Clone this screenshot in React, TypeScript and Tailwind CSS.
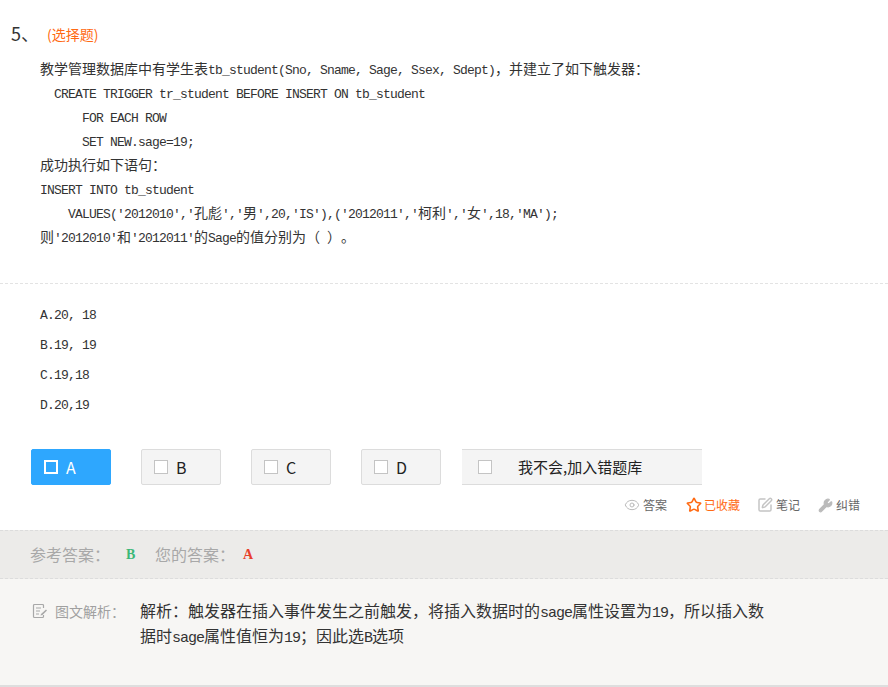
import { Eye, Star, SquarePen, Wrench } from "lucide-react";
import type { ReactNode } from "react";

const CJK = "font-['Noto_Sans_CJK_SC','Liberation_Sans',sans-serif] [text-spacing-trim:space-all]";

function M({ children }: { children: ReactNode }) {
  return (
    <span className="font-['Liberation_Mono',monospace] text-[13px] tracking-[-0.8px] leading-none whitespace-pre">
      {children}
    </span>
  );
}

function L({ children }: { children: ReactNode }) {
  return (
    <span className="font-['Liberation_Mono',monospace] text-[15px] tracking-[-1px] leading-none whitespace-pre">
      {children}
    </span>
  );
}

function Line({ children, className = "" }: { children: ReactNode; className?: string }) {
  return <div className={`h-6 leading-6 whitespace-pre ${className}`}>{children}</div>;
}

function Choice({ label, active }: { label: string; active?: boolean }) {
  return (
    <div
      className={`w-20 h-9 rounded-[2px] flex items-center pl-3 gap-2 text-base border ${
        active ? "bg-[#2ea7fe] border-[#2ea7fe] text-white" : "bg-[#f4f4f4] border-[#dcdcdc] text-[#222]"
      }`}
    >
      <span className={`w-3.5 h-3.5 block ${active ? "border-2 border-white" : "border border-[#c4c4c4] bg-white"}`} />
      <span>{label}</span>
    </div>
  );
}

function Action({ icon, label, className = "text-[#666] gap-[3px]" }: { icon: ReactNode; label: string; className?: string }) {
  return (
    <div className={`flex items-center text-xs ${className}`}>
      {icon}
      <span>{label}</span>
    </div>
  );
}

export default function App() {
  return (
    <div className={`w-[888px] h-[687px] overflow-hidden bg-white flex flex-col text-sm text-[#333] ${CJK}`}>
      <div className="h-[284px] border-b border-dashed border-[#e3e3e3]">
        <div className="flex items-center h-6 mt-[21px] pl-[11px]">
          <span className="w-9 text-lg text-[#333]">5、</span>
          <span className="text-sm text-[#ff6a13] mt-0.5">(选择题)</span>
        </div>
        <div className="pl-10 mt-[11px]">
          <Line>
            教学管理数据库中有学生表<M>tb_student(Sno, Sname, Sage, Ssex, Sdept)</M>，并建立了如下触发器：
          </Line>
          <Line className="pl-3.5">
            <M>CREATE TRIGGER tr_student BEFORE INSERT ON tb_student</M>
          </Line>
          <Line className="pl-[42px]">
            <M>FOR EACH ROW</M>
          </Line>
          <Line className="pl-[42px]">
            <M>SET NEW.sage=19;</M>
          </Line>
          <Line>成功执行如下语句：</Line>
          <Line>
            <M>INSERT INTO tb_student</M>
          </Line>
          <Line className="pl-7">
            <M>VALUES('2012010','</M>孔彪<M>','</M>男<M>',20,'IS'),('2012011','</M>柯利<M>','</M>女<M>',18,'MA');</M>
          </Line>
          <Line>
            则<M>'2012010'</M>和<M>'2012011'</M>的<M>Sage</M>的值分别为（<M> </M>）。
          </Line>
        </div>
      </div>

      <div className="pl-10 pt-3.5">
        {["A.20, 18", "B.19, 19", "C.19,18", "D.20,19"].map((t) => (
          <div key={t} className="h-[30px] leading-[30px]">
            <M>{t}</M>
          </div>
        ))}
      </div>

      <div className="flex mt-[31px] pl-[31px] gap-[30px]">
        <Choice label="A" active />
        <Choice label="B" />
        <Choice label="C" />
        <Choice label="D" />
        <div className="-ml-[9px] w-[240px] h-9 bg-[#f4f4f4] border-y border-[#dcdcdc] flex items-center pl-4 text-[#222]">
          <span className="w-3.5 h-3.5 block border border-[#c4c4c4] bg-white" />
          <span className="ml-[26px] text-[15px]">我不会,加入错题库</span>
        </div>
      </div>

      <div className="flex justify-end items-center gap-[17px] pr-7 h-10">
        <Action icon={<Eye size={16} strokeWidth={1.5} className="text-[#bbb]" />} label="答案" />
        <Action
          icon={<Star size={16} strokeWidth={2.4} className="text-[#ff6a13]" />}
          label="已收藏"
          className="text-[#ff6a13] gap-0.5 ml-0.5"
        />
        <Action icon={<SquarePen size={16} strokeWidth={2.2} className="text-[#c4c4c4]" />} label="笔记" />
        <Action
          icon={<Wrench size={15} className="text-[#bbb] fill-[#bbb]" />}
          label="纠错"
          className="text-[#666] gap-[3px] ml-px"
        />
      </div>

      <div className="h-[49px] mt-[5px] bg-[#ecebe9] border-y border-dashed border-[#dcdcdc] flex items-center pl-[30px] text-base text-[#a8a8a8]">
        <span className="w-[96px] -mt-0.5">参考答案：</span>
        <span className="w-[29px] font-['Liberation_Serif',serif] text-sm font-bold text-[#3cb878]">B</span>
        <span className="w-[88px] -mt-0.5">您的答案：</span>
        <span className="font-['Liberation_Serif',serif] text-sm font-bold text-[#e8402a]">A</span>
      </div>

      <div className="flex-1 bg-[#f7f6f4] border-b-2 border-[#dedede] flex pl-[32px] pt-[19px]">
        <svg width="16" height="16" viewBox="0 0 16 16" fill="none" stroke="#a8a8a8" strokeWidth="1.2" className="mt-[5px]">
          <path d="M11.5 5V2.5a1 1 0 0 0-1-1h-8a1 1 0 0 0-1 1v11a1 1 0 0 0 1 1h8a1 1 0 0 0 1-1V12" />
          <path d="M4 5h5M4 8h4M4 11h3" />
          <path d="M9 11l5-4.5 1 1-4.5 4.5-2 .5z" fill="#a8a8a8" stroke="none" />
        </svg>
        <span className="ml-[7px] w-[85px] text-sm text-[#a0a0a0] leading-[26px]">图文解析：</span>
        <div className="w-[640px] leading-[25px] text-base text-[#333]">
          解析：触发器在插入事件发生之前触发，将插入数据时的<L>sage</L>属性设置为<L>19</L>，所以插入数
          <br />
          据时<L>sage</L>属性值恒为<L>19</L>；因此选<L>B</L>选项
        </div>
      </div>
    </div>
  );
}
